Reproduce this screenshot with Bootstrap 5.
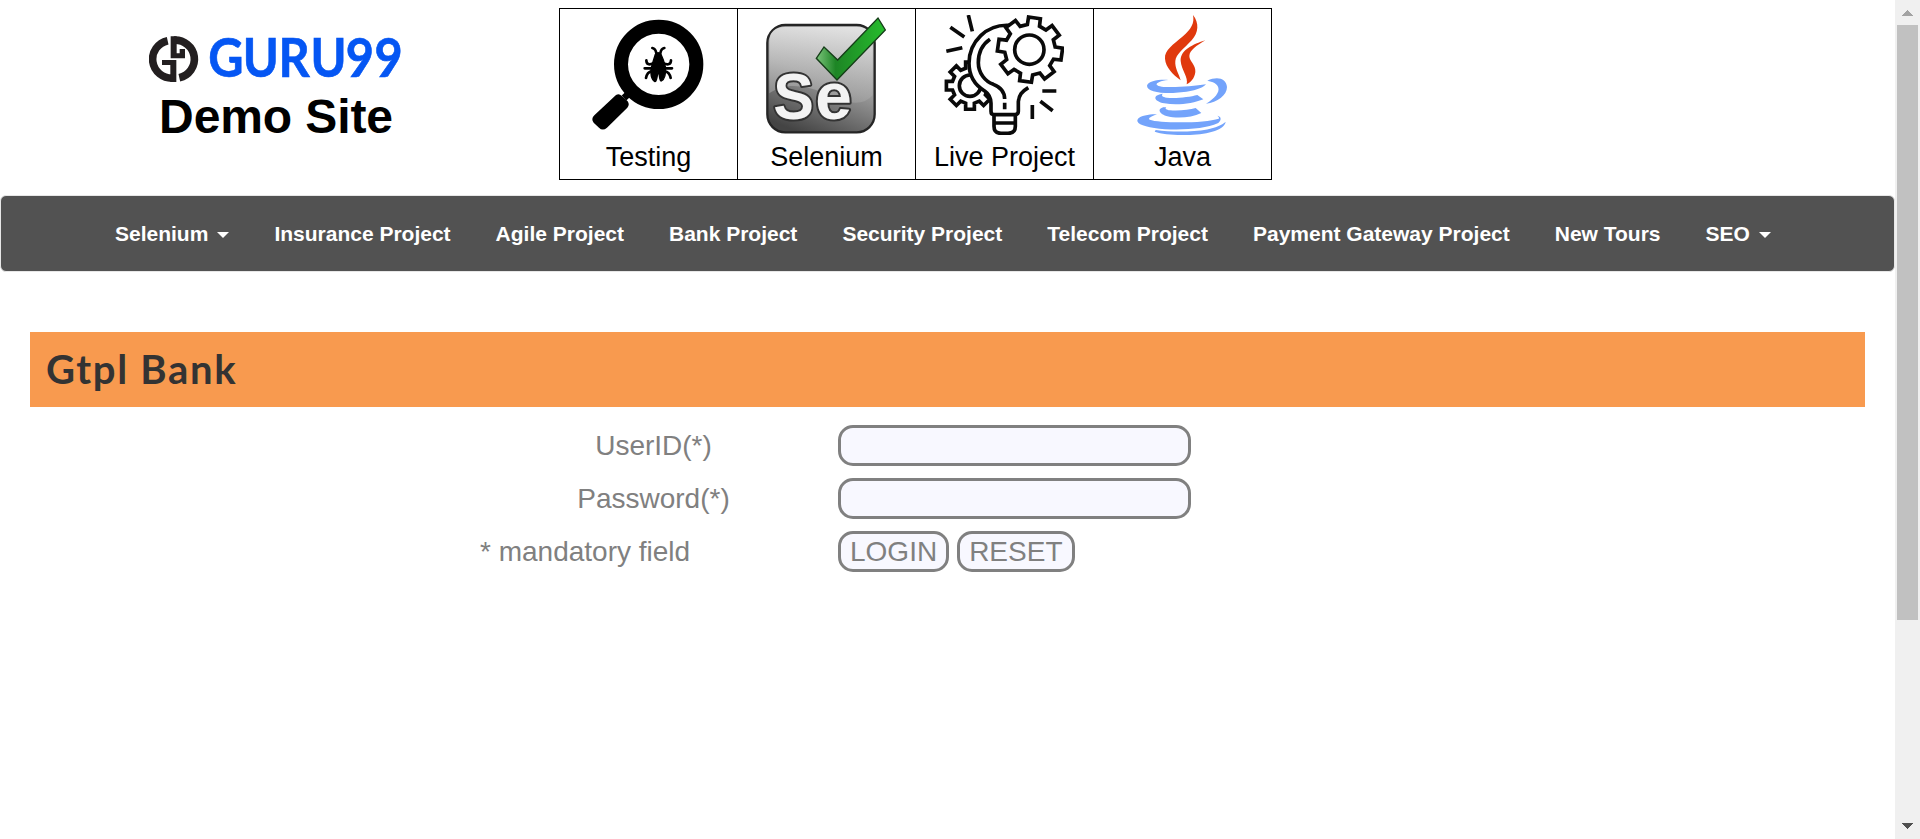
<!DOCTYPE html>
<html lang="en">
<head>
<meta charset="utf-8">
<title>Gtpl Bank</title>
<link href="https://cdn.jsdelivr.net/npm/bootstrap@5.3.0/dist/css/bootstrap.min.css" rel="stylesheet">
<style>
body{font-family:"Liberation Sans",Arial,sans-serif;color:#000}
.site-head{height:195px;padding-top:8px}
.brand-box{width:559px;padding:27px 7px 0 0}
.brand-box svg{width:258px;height:67px;margin:-12px -4px -6px 0}
.brand-title{font-size:48px;line-height:54px;margin-top:6px;font-weight:700;letter-spacing:-.1px}
.topic-list{height:172px;border:1px solid #000;width:713px}
.topic{flex:1 1 0;padding-top:6px;font-size:27px;line-height:38px;border-right:1px solid #000;color:#000}
.topic:last-child{border-right:0}
.topic svg{width:120px;height:120px;margin-left:-1px}
.topic span{margin-top:3px}
.main-nav{height:77px;background:#525252;border:1px solid #e7e7e7;border-radius:6px;padding:0 0 0 91.5px}
.main-nav .nav-link{color:#fff;font-weight:700;font-size:21px;line-height:30px;padding:0 22.5px;white-space:nowrap}
.main-nav .dropdown-toggle::after{border-top:6px solid;border-left:6px solid transparent;border-right:6px solid transparent;margin-left:9px;vertical-align:3px}
.bank-title{margin:60px 30px 0;height:75px;background:#f89a4f;color:#333;padding:0 16px;font:700 40px/74px Lato,sans-serif;letter-spacing:1.7px}
.login-form{margin:18px 0 0 480px;display:grid;grid-template-columns:347px 353px;column-gap:11px;row-gap:12px;font-size:28px;line-height:35px;color:gray}
.login-form label,.login-form p{margin:0;line-height:41px}
.login-form .field,.login-form .action{height:41px;border:3px solid gray;border-radius:15px;background:#f8f8ff;color:gray;padding:0 9px;font-size:28px;line-height:35px}
.login-form .field{width:353px}
.scroll-track{width:25px;background:#f0f0f0}
.scroll-cap{height:25px}
.scroll-thumb{width:21px;height:595px;background:#c1c1c1}
</style>
</head>
<body class="d-flex vh-100 overflow-hidden bg-white">
<div class="flex-grow-1">
  <header class="site-head d-flex">
    <div class="brand-box d-flex flex-column align-items-center">
      <svg viewBox="58 9 774 201">
        <g fill="none" stroke="#231f20" stroke-width="23">
          <path d="M114 62A58 57 0 0 0 130 174.500"/>
          <path d="M149 173A58 57 0 0 0 133 60.500"/>
        </g>
        <path fill="#231f20" d="M97 120H140V186H122V135H97ZM166 115H123V49H141V100H150V87H166Z"/>
        <text transform="scale(.9 1)" x="262 377 496 603 720 816" y="172" font-family="Lato,sans-serif" font-weight="700" font-size="162" fill="#0556f3" stroke="#0556f3" stroke-width="2">GURU99</text>
      </svg>
      <div class="brand-title">Demo Site</div>
    </div>
    <nav class="topic-list d-flex">
      <a class="topic d-flex flex-column align-items-center text-decoration-none">
        <svg viewBox="114 45 360 360">
          <circle cx="326" cy="193" r="113" fill="none" stroke="#000" stroke-width="42"/>
          <path d="M241 276L222 294" stroke="#000" stroke-width="20"/>
          <path d="M198 285Q207 279 215 287L233 304Q240 314 232 323L171 383Q158 394 147 383L131 368Q122 357 133 346Z"/>
          <path d="M316 163Q324 153 333 163L340 180L346 200C348 220 344 238 334 243C329 245 328 222 325 212C322 224 320 246 315 245C304 239 300 220 304 202L310 182Z" stroke="#000" stroke-width="4"/>
          <path d="M319 160Q317 146 307 144M331 160Q333 146 343 144M310 190Q290 199 289 181M340 190Q362 199 363 181M304 205H284M345 205H366M306 213Q291 216 288 234M343 213Q359 216 362 234" fill="none" stroke="#000" stroke-width="8" stroke-linecap="round"/>
        </svg>
        <span>Testing</span>
      </a>
      <a class="topic d-flex flex-column align-items-center text-decoration-none">
        <svg viewBox="108 45 360 360">
          <defs>
            <linearGradient id="plate" x1=".7" y1="0" x2=".3" y2="1"><stop offset="0" stop-color="#c8c8c8"/><stop offset=".5" stop-color="#969696"/><stop offset="1" stop-color="#444"/></linearGradient>
            <linearGradient id="gloss" x1="0" y1="0" x2="0" y2="1"><stop offset="0" stop-color="#eee" stop-opacity=".7"/><stop offset="1" stop-color="#aaa" stop-opacity=".45"/></linearGradient>
            <linearGradient id="tick" x1="0" y1="0" x2="1" y2="0"><stop offset="0" stop-color="#7bc47b"/><stop offset=".28" stop-color="#1d8525"/><stop offset="1" stop-color="#27bd2d"/></linearGradient>
          </defs>
          <rect x="112" y="75" width="322" height="322" rx="54" fill="url(#plate)" stroke="#252525" stroke-width="7"/>
          <path d="M118 280V125Q119 81 165 81H381Q428 83 428 125V285C395 325 340 307 280 278C220 255 165 248 118 280Z" fill="url(#gloss)"/>
          <g font-family="Liberation Sans,Arial,sans-serif" font-weight="700" stroke-linejoin="round">
            <g fill="#f3f3f3" stroke="#333" stroke-width="12" paint-order="stroke">
              <text x="130" y="358" font-size="197" textLength="122" lengthAdjust="spacingAndGlyphs">S</text>
              <text x="256" y="358" font-size="198" textLength="110" lengthAdjust="spacingAndGlyphs">e</text>
            </g>
          </g>
          <path d="M259 175L282 141L323 180L444 54L466 90L321 240Z" fill="url(#tick)" stroke="#153d18" stroke-width="4"/>
        </svg>
        <span>Selenium</span>
      </a>
      <a class="topic d-flex flex-column align-items-center text-decoration-none">
        <svg viewBox="102 45 360 360" fill="none" stroke="#0a0a0a" stroke-width="11">
          <path class="gear" data-x="180" data-y="257" data-inner="54" data-outer="72" data-turn="0"/>
          <circle cx="180" cy="257" r="32"/>
          <path d="M300 76C230 71 177 125 177 190C177 235 202 260 224 273C240 284 243 295 243 310V334Q243 344 252 344H316Q325 343 325 334V305C327 285 335 275 355 263L430 180Z" fill="#fff" stroke="none"/>
          <path d="M300 76C230 71 177 125 177 190C177 235 202 260 224 273C240 284 243 295 243 310V334Q243 344 252 344H316Q325 343 325 334V305C327 285 335 275 355 263"/>
          <path d="M240 118C213 136 205 164 205 188C205 219 225 244 250 253C273 262 284 276 284 297M284 308V328"/>
          <path d="M252 344V379Q252 400 273 400H294Q316 400 316 379V344M252 369H316"/>
          <path class="gear" data-x="360" data-y="149" data-inner="76" data-outer="98" data-turn="8" fill="#fff"/>
          <circle cx="358" cy="149" r="44"/>
          <path d="M175 45L187 94M121 82L163 111M109 154L157 143M397 273H439M391 304L428 332M367 315V357"/>
        </svg>
        <span>Live Project</span>
      </a>
      <a class="topic d-flex flex-column align-items-center text-decoration-none">
        <svg viewBox="96 45 360 360">
          <g fill="#e0390d">
            <path d="M309 45C328 69 326 98 305 121C281 147 258 163 256 183C254 204 266 220 272 241C248 223 227 202 225 176C223 149 250 134 277 110C304 88 314 69 309 45Z"/>
            <path d="M346 121C319 137 299 151 298 168C298 184 318 195 316 216C314 235 302 247 290 253C296 232 274 210 272 183C271 150 309 133 346 121Z"/>
          </g>
          <g fill="#73a3fb">
            <path d="M235 240C212 242 198 249 200 254C210 267 300 260 348 253C334 270 282 279 242 279C199 279 171 272 171 257C174 243 207 238 235 240Z"/>
            <path d="M352 242C382 228 409 235 411 261C411 286 382 307 348 311C375 294 389 277 385 263C382 250 368 245 352 242Z"/>
            <path d="M219 281C212 286 218 291 230 293C259 296 299 291 322 285L340 298C309 311 260 317 223 310C190 303 186 285 219 281Z"/>
            <path d="M229 321C223 325 229 330 240 331C267 333 298 330 317 324L334 339C304 353 262 357 229 348C204 340 200 322 229 321Z"/>
            <path d="M201 343C184 349 173 355 179 359C208 370 346 370 386 356C389 354 386 350 382 347C396 349 394 363 383 370C342 389 251 393 193 384C155 378 135 368 144 356C152 347 180 342 201 343Z"/>
            <path d="M407 365C402 396 331 406 275 405C243 404 213 402 194 395L197 390C265 399 374 397 407 365Z"/>
          </g>
        </svg>
        <span>Java</span>
      </a>
    </nav>
  </header>

  <nav class="main-nav navbar">
    <ul class="nav flex-nowrap">
      <li class="nav-item"><a class="nav-link dropdown-toggle">Selenium</a></li>
      <li class="nav-item"><a class="nav-link">Insurance Project</a></li>
      <li class="nav-item"><a class="nav-link">Agile Project</a></li>
      <li class="nav-item"><a class="nav-link">Bank Project</a></li>
      <li class="nav-item"><a class="nav-link">Security Project</a></li>
      <li class="nav-item"><a class="nav-link">Telecom Project</a></li>
      <li class="nav-item"><a class="nav-link">Payment Gateway Project</a></li>
      <li class="nav-item"><a class="nav-link">New Tours</a></li>
      <li class="nav-item"><a class="nav-link dropdown-toggle">SEO</a></li>
    </ul>
  </nav>

  <h2 class="bank-title">Gtpl Bank</h2>

  <form class="login-form">
    <label class="text-center" for="uid">UserID(*)</label>
    <input class="field" id="uid" type="text">
    <label class="text-center" for="pwd">Password(*)</label>
    <input class="field" id="pwd" type="password">
    <p>* mandatory field</p>
    <div class="d-flex gap-2">
      <button class="action" type="button">LOGIN</button>
      <button class="action" type="button">RESET</button>
    </div>
  </form>
</div>

<div class="scroll-track flex-shrink-0 d-flex flex-column align-items-center">
  <svg class="scroll-cap" width="25" height="25" shape-rendering="crispEdges"><path d="M7 16L12.500 10L18 16Z" fill="#a3a3a3"/></svg>
  <div class="scroll-thumb"></div>
  <svg class="scroll-cap mt-auto" width="25" height="25" shape-rendering="crispEdges"><path d="M7 9L12.500 15L18 9Z" fill="#505050"/></svg>
</div>

<script src="https://cdn.jsdelivr.net/npm/bootstrap@5.3.0/dist/js/bootstrap.bundle.min.js"></script>
<script>
// Eight-toothed gear outlines
document.querySelectorAll('.gear').forEach(function (g) {
  var d = g.dataset, pts = [];
  for (var i = 0; i < 8; i++) {
    [[-14, d.inner], [-10.5, d.outer], [10.5, d.outer], [14, d.inner]].forEach(function (p) {
      var a = (i * 45 + +d.turn + p[0]) * Math.PI / 180;
      pts.push((+d.x + p[1] * Math.cos(a)).toFixed(1) + ' ' + (+d.y + p[1] * Math.sin(a)).toFixed(1));
    });
  }
  g.setAttribute('d', 'M' + pts.join('L') + 'Z');
});
</script>
</body>
</html>
